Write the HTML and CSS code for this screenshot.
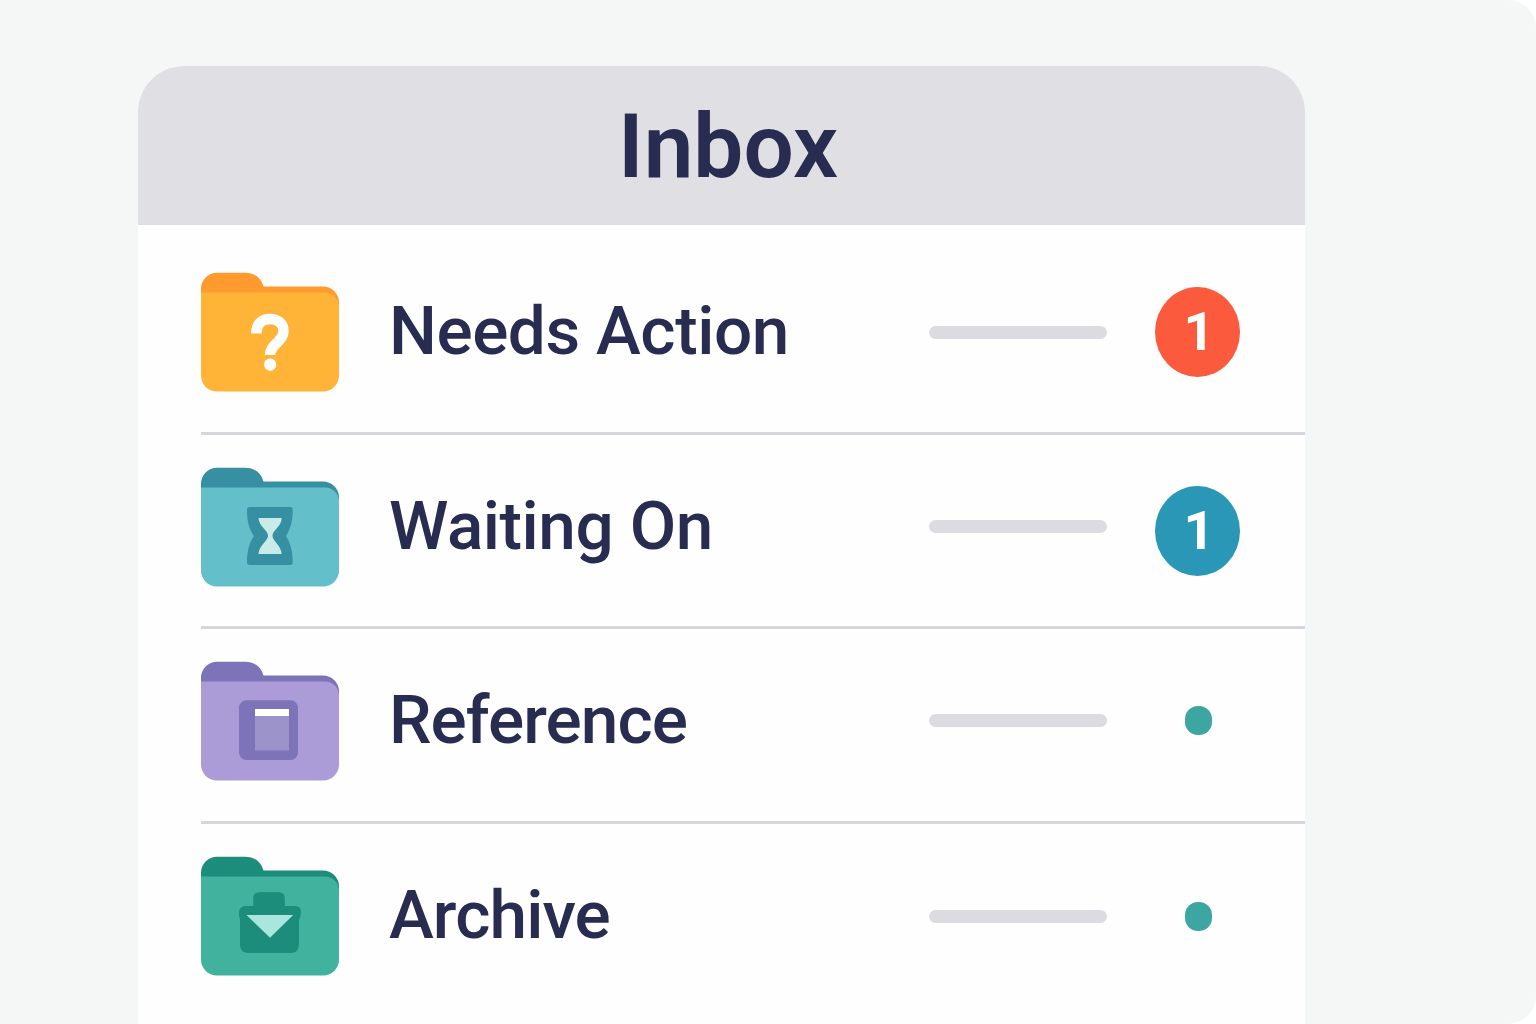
FILE: index.html
```html
<!DOCTYPE html>
<html lang="en">
<head>
    <meta charset="UTF-8">
    <meta name="viewport" content="width=device-width, initial-scale=1.0">
    <title>Inbox</title>
    <link rel="stylesheet" href="styles.css">
</head>
<body>
    <!-- folder shape shared by every row -->
    <svg class="shapes" width="0" height="0">
        <symbol id="folder" viewBox="0 0 138 120">
            <path class="folder-back" d="M0 40V17A16 16 0 0 1 16 .8H44C54 .8 60 6 62.500 14.500H122A16 16 0 0 1 138 30V60H0Z"/>
            <path class="folder-front" d="M0 20.500H124A14 14 0 0 1 138 34V103A16 16 0 0 1 122 119.500H16A16 16 0 0 1 0 103Z"/>
        </symbol>
    </svg>

    <div class="page">
        <div class="panel">
            <div class="panel-header">
                <h1>Inbox</h1>
            </div>

            <div class="row action">
                <svg class="folder" viewBox="0 0 138 120">
                    <use href="#folder"/>
                    <path class="question" d="M55.300 61.500C55.300 51.500 61 47 69 47C77.500 47 82.500 52 82.500 59C82.500 70 69 72 69 83"/>
                    <circle class="white" cx="69.200" cy="92.700" r="6.200"/>
                </svg>
                <span class="label">Needs Action</span>
                <span class="line"></span>
                <div class="status"><span class="badge">1</span></div>
            </div>

            <div class="row waiting">
                <svg class="folder" viewBox="0 0 138 120">
                    <use href="#folder"/>
                    <path class="dark" d="M49 40H89Q92 40 91.700 43C91.700 55 89 63 85 69C89 75 91.700 84 91.700 95Q92 98 89 98H49Q46 98 46 95C46 84 48.500 75 53 69C48.500 63 46 55 46 43Q46 40 49 40Z"/>
                    <path class="light" d="M57.500 51H80.700C80.500 60 71.500 63 71.500 68.700C71.500 74 80 78 80.700 87H57.500C58 78 67 74 67 68.700C67 63 58 60 57.500 51Z"/>
                </svg>
                <span class="label">Waiting On</span>
                <span class="line"></span>
                <div class="status"><span class="badge">1</span></div>
            </div>

            <div class="row reference">
                <svg class="folder" viewBox="0 0 138 120">
                    <use href="#folder"/>
                    <rect class="dark" x="38" y="39.300" width="59" height="59.700" rx="7.500"/>
                    <rect class="paper" x="54" y="48" width="34" height="41.500"/>
                    <rect class="white" x="54" y="48" width="34" height="7"/>
                </svg>
                <span class="label">Reference</span>
                <span class="line"></span>
                <div class="status"><span class="dot"></span></div>
            </div>

            <div class="row archive">
                <svg class="folder" viewBox="0 0 138 120">
                    <use href="#folder"/>
                    <path class="dark" d="M52.300 50V42.500Q52.300 36.300 58.500 36.300H77.500Q83.800 36.300 83.800 42.500V50H94Q100 50 100 56Q100 60 98 64V88.500Q98 97 89.500 97H47.500Q39 97 39 88.500V64Q38 61 38 57Q38 50 45 50Z"/>
                    <path class="light" d="M45.500 59H92.200L69 81.800Z"/>
                </svg>
                <span class="label">Archive</span>
                <span class="line"></span>
                <div class="status"><span class="dot"></span></div>
            </div>
        </div>
    </div>
</body>
</html>
```
FILE: styles.css
```css
* {
    box-sizing: border-box;
}
body {
    margin: 0;
    background: #ffffff;
    font-family: Roboto, "Liberation Sans", sans-serif;
    color: #272c50;
}
.shapes {
    display: block;
}
.page {
    height: 1024px;
    padding: 66px 0 0 138px;
    background: #f5f7f7;
    border-radius: 0 28px 28px 0;
    overflow: hidden;
}
.panel {
    width: 1167px;
    height: 958px;
    background: #fefefe;
    border-radius: 46px 46px 0 0;
    overflow: hidden;
}
.panel-header {
    height: 159px;
    background: #e0dfe4;
    text-align: center;
    padding-left: 13px;
}
h1 {
    margin: 0;
    font-size: 89px;
    font-weight: 600;
    line-height: 162px;
}

/* rows */
.row {
    display: flex;
    align-items: center;
    height: 194px;
    margin-left: 63px;
    padding: 32px 65px 39px 0;
    border-bottom: 3px solid #d7d6de;
}
.folder {
    width: 138px;
    height: 120px;
    flex: none;
}
.label {
    width: 540px;
    margin-left: 50px;
    padding-bottom: 2px;
    font-size: 67.5px;
    font-weight: 500;
    line-height: 118px;
    letter-spacing: -0.45px;
    white-space: nowrap;
}
.line {
    width: 178px;
    height: 13px;
    border-radius: 7px;
    background: #dbdbe1;
}
.status {
    display: flex;
    justify-content: center;
    width: 85px;
    margin-left: auto;
}
.badge {
    width: 85px;
    height: 90px;
    flex: none;
    padding-left: 3px;
    border-radius: 50%;
    color: #ffffff;
    font-size: 54px;
    font-weight: 700;
    line-height: 90px;
    text-align: center;
}
.dot {
    width: 27px;
    height: 29px;
    margin-left: 1px;
    border-radius: 13px;
    background: #3da6a2;
}

/* colours */
.white {
    fill: #ffffff;
}
.question {
    fill: none;
    stroke: #ffffff;
    stroke-width: 10.5px;
}
.folder-back,
.dark {
    fill: var(--dark);
}
.folder-front {
    fill: var(--front);
}
.light {
    fill: var(--light);
}
.paper {
    fill: #9b93ca;
}
.action {
    --dark: #ff9a2e;
    --front: #ffb337;
    height: 210px;
    padding-top: 47px;
    padding-bottom: 40px;
}
.action .badge {
    background: #fb5a3c;
}
.waiting {
    --dark: #378fa2;
    --front: #63bfc9;
    --light: #c9ece9;
}
.waiting .line {
    margin-bottom: 2px;
}
.waiting .badge {
    background: #2a97b7;
    margin-top: 7px;
}
.reference {
    --dark: #7d73b8;
    --front: #ab9cd8;
    height: 195px;
    padding-top: 31px;
    padding-bottom: 40px;
}
.archive {
    --dark: #1c8c7b;
    --front: #41b29d;
    --light: #a9e6dd;
    padding-bottom: 42px;
    border-bottom: 0;
}
.reference .label,
.archive .label {
    letter-spacing: -0.9px;
}
```
